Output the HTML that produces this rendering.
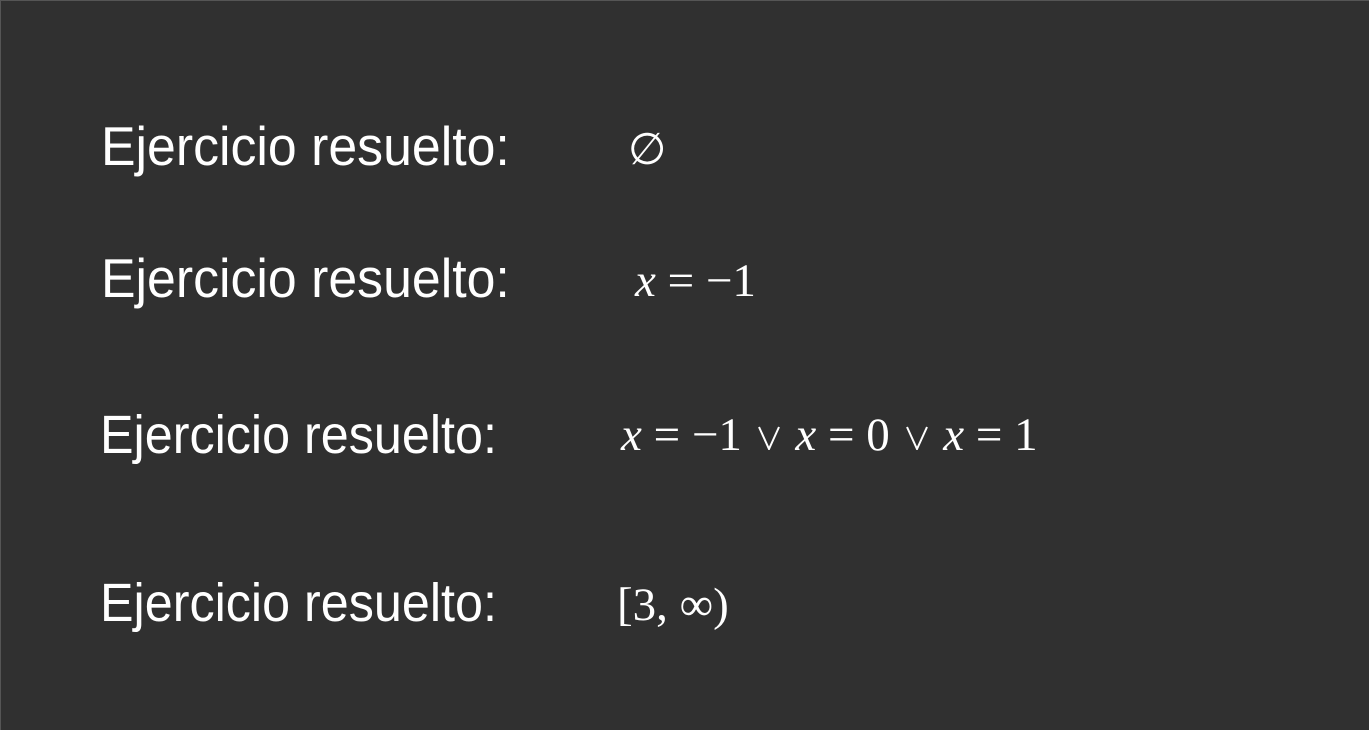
<!DOCTYPE html>
<html><head><meta charset="utf-8"><style>
html,body{margin:0;padding:0}
body{width:1369px;height:730px;background:#303030;position:relative;overflow:hidden;border-top:1px solid #555;border-left:1px solid #555;box-sizing:border-box}
.l{position:absolute;font-family:"Liberation Sans",sans-serif;color:#fff;line-height:1;white-space:nowrap;transform-origin:0 80%;transform:scaleY(1.06)}
.m{position:absolute;font-family:"Liberation Serif",serif;color:#fff;line-height:1;white-space:nowrap;font-size:47px}
i{font-style:italic}
.or{display:inline-block;width:26px;height:24px;margin:0 2px;vertical-align:0}
</style></head><body>
<div class="l" style="left:100px;top:121px;font-size:51.8px">Ejercicio resuelto:</div>
<div class="m" style="left:627px;top:127px;font-size:44px">∅</div>
<div class="l" style="left:100px;top:253px;font-size:51.8px">Ejercicio resuelto:</div>
<div class="m" style="left:634px;top:257px"><i>x</i> = −1</div>
<div class="l" style="left:99px;top:410px;font-size:50.3px">Ejercicio resuelto:</div>
<div class="m" style="left:620px;top:411px"><i>x</i> = −1 <svg class="or" viewBox="0 0 26 24"><path d="M3 1 L13 23 L23 1" fill="none" stroke="#fff" stroke-width="2"/></svg> <i>x</i> = 0 <svg class="or" viewBox="0 0 26 24"><path d="M3 1 L13 23 L23 1" fill="none" stroke="#fff" stroke-width="2"/></svg> <i>x</i> = 1</div>
<div class="l" style="left:99px;top:578px;font-size:50.3px">Ejercicio resuelto:</div>
<div class="m" style="left:616px;top:581px">[3, ∞)</div>
</body></html>
